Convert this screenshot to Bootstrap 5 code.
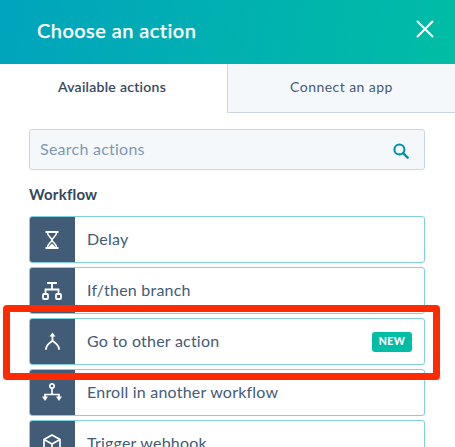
<!DOCTYPE html>
<html lang="en">
<head>
<meta charset="utf-8">
<title>Choose an action</title>
<link href="https://cdn.jsdelivr.net/npm/bootstrap@5.3.0/dist/css/bootstrap.min.css" rel="stylesheet">
<style>
html,body{height:447px;overflow:hidden;background:#fff}
body{font-family:"Lato","Liberation Sans",sans-serif;color:#33475b;position:relative}
.hs-head{height:64px;background:linear-gradient(100deg,#00a4bd,#00bda5);padding:0 21px 0 37px}
.hs-title{font-size:20px;font-weight:500;color:#fff;margin:0 0 5px;letter-spacing:.45px;-webkit-text-stroke:.25px #fff}
.hs-close{background:none;border:0;padding:0;width:18px;height:18px;line-height:0;margin-bottom:6px}
.hs-tabs{height:49px}
.hs-tab{font-size:14px;padding:0 0 4px}
.hs-tab-on{width:227px;color:#33475b;font-weight:500;background:#fff;letter-spacing:.3px;-webkit-text-stroke:.15px #33475b;padding-right:3px}
.hs-tab-off{color:#425b76;background:#f5f8fa;border-left:1px solid #cbd6e2;border-bottom:1px solid #cbd6e2;letter-spacing:.45px}
.hs-body{padding:16px 30px 0 29px}
.hs-search{height:41px;background:#f5f8fa;border:1px solid #cbd6e2;border-radius:3px;padding:0 15px 0 10px}
.hs-search-text{font-size:16px;letter-spacing:.25px;color:#7c98b6;margin-bottom:2px}
.hs-search-ico{margin-top:3px}
.hs-sec{font-size:15px;font-weight:700;color:#33475b;margin:14px 0 12px;line-height:20px;letter-spacing:.2px}
.hs-list{gap:4px}
.hs-row{height:47px;border:1px solid #7fd1de;border-radius:3px;overflow:hidden;flex:none;background:#fff}
.hs-ico{width:46px;background:#425b76;margin:-1px 0 -1px -1px}
.hs-label{font-size:16px;letter-spacing:.22px;color:#425b76;padding:0 0 2px 12px}
.hs-new{background:#00bda5;color:#fff;font-size:10.5px;font-weight:900;letter-spacing:.4px;border-radius:3px;width:40px;height:20px;margin-right:12px}
.hs-mark{position:absolute;left:3px;top:305px;width:437px;height:75px;border:7px solid #ff2a00;border-radius:4px;pointer-events:none}
</style>
</head>
<body>
<div class="hs-head d-flex align-items-center justify-content-between">
  <h1 class="hs-title">Choose an action</h1>
  <button class="hs-close" type="button" aria-label="Close">
    <svg width="18" height="18" viewBox="0 0 18 18"><path d="M1.500 1.500 16.500 16.500M16.500 1.500 1.500 16.500" stroke="#fff" stroke-width="2" stroke-linecap="round"/></svg>
  </button>
</div>
<div class="hs-tabs d-flex">
  <div class="hs-tab hs-tab-on d-flex align-items-center justify-content-center">Available actions</div>
  <div class="hs-tab hs-tab-off flex-grow-1 d-flex align-items-center justify-content-center">Connect an app</div>
</div>
<div class="hs-body">
  <div class="hs-search d-flex align-items-center justify-content-between">
    <span class="hs-search-text">Search actions</span>
    <svg class="hs-search-ico" width="16" height="16" viewBox="0 0 17 17"><circle cx="6.800" cy="6.800" r="5.300" fill="none" stroke="#0091ae" stroke-width="2.200"/><path d="M10.800 10.800 15.500 15.500" stroke="#0091ae" stroke-width="2.600" stroke-linecap="round"/></svg>
  </div>
  <div class="hs-sec">Workflow</div>
  <div class="hs-list d-flex flex-column">
    <div class="hs-row d-flex align-items-stretch">
      <div class="hs-ico d-flex align-items-center justify-content-center">
        <svg width="14" height="18" viewBox="0 0 14 18" fill="none" stroke="#fff"><path d="M0.500 1h13M0.500 17h13" stroke-width="2"/><path d="M2.500 2c0 3 4.500 5 4.500 7S2.500 13 2.500 16M11.500 2c0 3-4.500 5-4.500 7s4.500 4 4.500 7" stroke-width="1.500"/><path d="M3.500 16 7 12.500 10.500 16z" fill="#fff" stroke="none"/></svg>
      </div>
      <div class="hs-label d-flex align-items-center">Delay</div>
    </div>
    <div class="hs-row d-flex align-items-stretch">
      <div class="hs-ico d-flex align-items-center justify-content-center">
        <svg width="20" height="18" viewBox="0 0 20 18" fill="none" stroke="#fff" stroke-width="1.800"><path d="M5 1h10M10 1v6M3.500 12V7.500h13V12"/><rect x="1" y="12" width="5" height="5" rx="1"/><rect x="14" y="12" width="5" height="5" rx="1"/></svg>
      </div>
      <div class="hs-label d-flex align-items-center">If/then branch</div>
    </div>
    <div class="hs-row d-flex align-items-stretch">
      <div class="hs-ico d-flex align-items-center justify-content-center">
        <svg width="17" height="19" viewBox="0 0 16 19" fill="none" stroke="#fff" stroke-width="1.800" stroke-linecap="round"><path d="M8 3v5.500M1.500 17c0-4 3.500-5.500 6.500-8.500 3 3 6.500 4.500 6.500 8.500"/><path d="M8 0.500 11 4.500H5z" fill="#fff" stroke="none"/></svg>
      </div>
      <div class="hs-label d-flex align-items-center flex-grow-1">Go to other action</div>
      <div class="d-flex align-items-center"><span class="hs-new d-flex align-items-center justify-content-center">NEW</span></div>
    </div>
    <div class="hs-row d-flex align-items-stretch">
      <div class="hs-ico d-flex align-items-center justify-content-center">
        <svg width="20" height="19" viewBox="0 0 20 19" fill="none" stroke="#fff" stroke-width="1.700"><circle cx="10" cy="3" r="2.200"/><path d="M10 5.500v6M3 15v-3.500h14V15"/><path d="M0 13.500h6L3 18zM14 13.500h6L17 18z" fill="#fff" stroke="none"/></svg>
      </div>
      <div class="hs-label d-flex align-items-center">Enroll in another workflow</div>
    </div>
    <div class="hs-row d-flex align-items-stretch">
      <div class="hs-ico d-flex align-items-center justify-content-center">
        <svg width="18" height="20" viewBox="0 0 18 20" fill="none" stroke="#fff" stroke-width="1.700" stroke-linejoin="round"><path d="M9 1 17 5.500v9L9 19 1 14.500v-9zM1 5.500 9 10l8-4.500M9 10v9"/></svg>
      </div>
      <div class="hs-label d-flex align-items-center">Trigger webhook</div>
    </div>
  </div>
</div>
<div class="hs-mark"></div>
</body>
</html>
